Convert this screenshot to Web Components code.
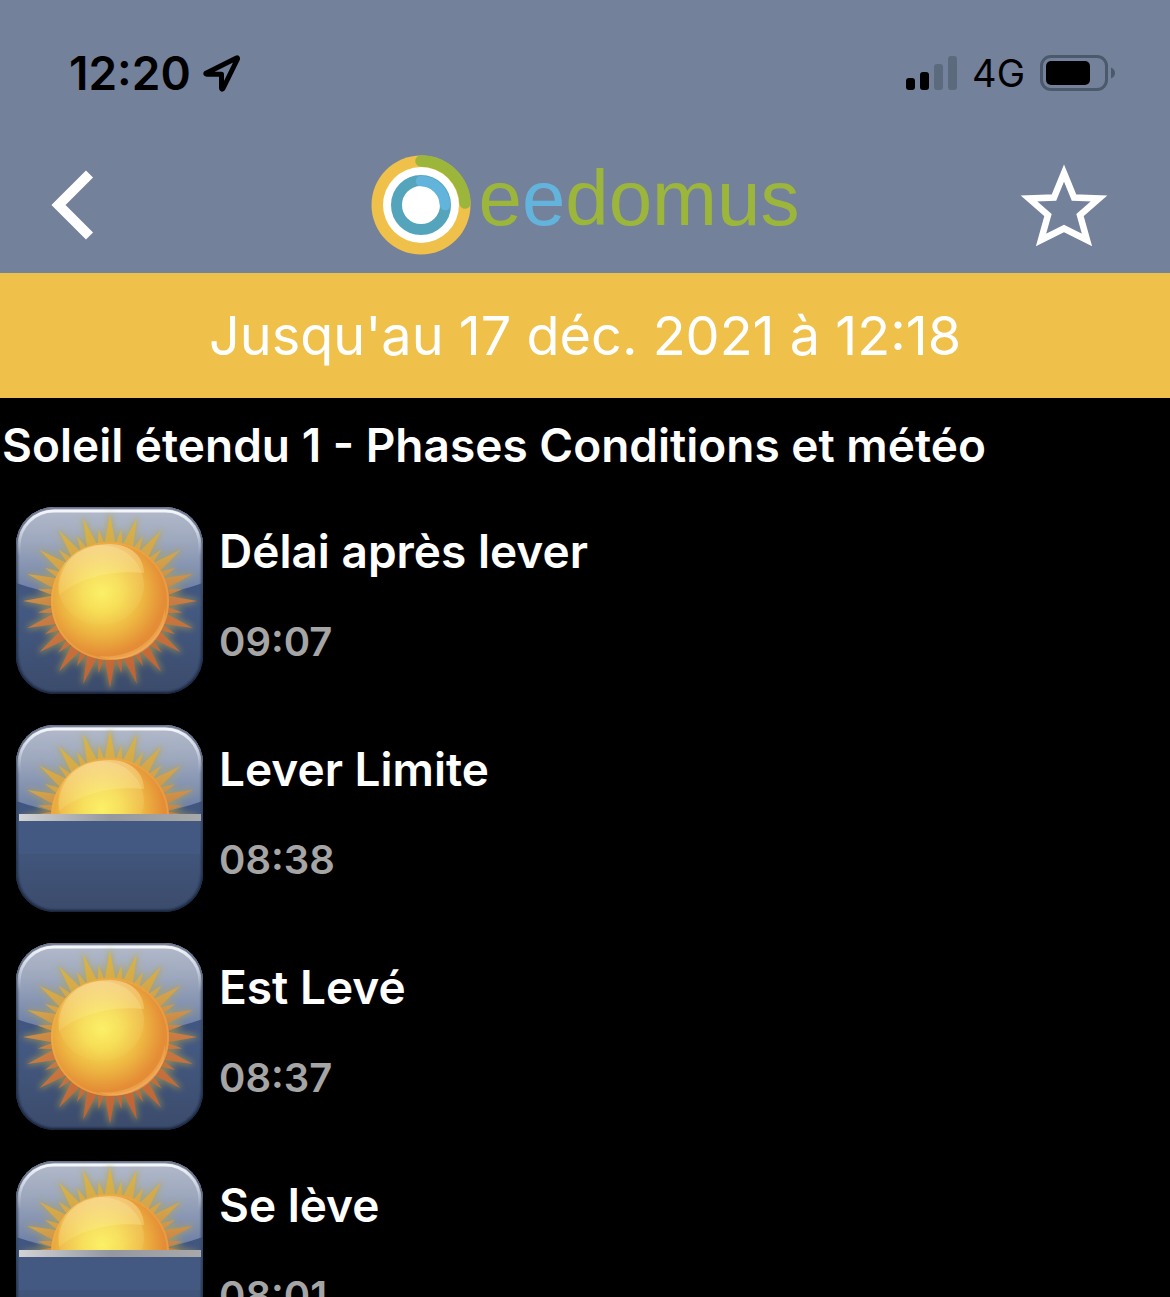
<!DOCTYPE html>
<html lang="fr">
<head>
<meta charset="utf-8">
<meta name="viewport" content="width=device-width, initial-scale=1">
<title>eedomus</title>
<style>
  html, body {
    height: 100%;
    margin: 0;
  }

  body {
    background: #000;
    color: #fff;
    font-family: Inter, "Liberation Sans", sans-serif;
  }
</style>
</head>
<body>
<eed-app>
  <eed-status-bar slot="header" time="12:20" network="4G"></eed-status-bar>
  <eed-nav-bar slot="header"></eed-nav-bar>
  <eed-banner slot="header">Jusqu'au 17 déc. 2021 à 12:18</eed-banner>
  <eed-history label="Soleil étendu 1 - Phases Conditions et météo">
    <eed-event name="Délai après lever" time="09:07" icon="sun"></eed-event>
    <eed-event name="Lever Limite" time="08:38" icon="horizon"></eed-event>
    <eed-event name="Est Levé" time="08:37" icon="sun"></eed-event>
    <eed-event name="Se lève" time="08:01" icon="horizon"></eed-event>
  </eed-history>
</eed-app>

<script>
class EedApp extends HTMLElement {
  connectedCallback() {
    const shadowRoot = this.attachShadow({ mode: 'open' });
    shadowRoot.innerHTML = `
      <style>
        :host {
          display: flex;
          flex-direction: column;
          height: 100vh;
        }

        header {
          flex: none;
          background: #74819b;
        }

        main {
          flex: 1;
          min-height: 0;
          overflow-y: auto;
          scrollbar-width: none;
        }
      </style>
      <header><slot name="header"></slot></header>
      <main><slot></slot></main>`;
  }
}
customElements.define('eed-app', EedApp);

class EedStatusBar extends HTMLElement {
  connectedCallback() {
    const shadowRoot = this.attachShadow({ mode: 'open' });
    shadowRoot.innerHTML = `
      <style>
        :host {
          display: flex;
          justify-content: space-between;
          align-items: center;
          box-sizing: border-box;
          height: 137px;
          padding: 9px 54px 0 69px;
          color: #000;
        }

        div {
          display: flex;
          align-items: center;
        }

        .left {
          gap: 12px;
          font-size: 46px;
          font-weight: 600;
        }

        .right {
          gap: 15px;
          font-size: 38px;
        }

        svg {
          display: block;
        }
      </style>
      <div class="left">
        <span>${this.getAttribute('time')}</span>
        <svg width="38" height="38" viewBox="0 0 38 38" aria-hidden="true">
          <path d="M33.500 4 3 19.300Q2.500 20 4 20.200H18.500V34Q18.500 36 20 34.500L34.500 5Q34.800 3.500 33.500 4Z" fill="none" stroke="#000" stroke-width="5" stroke-linejoin="round"/>
        </svg>
      </div>
      <div class="right">
        <svg width="51" height="36" viewBox="0 0 51 36" aria-hidden="true">
          <rect x="0" y="23" width="9" height="12" rx="3"/>
          <rect x="14" y="17" width="9" height="18" rx="3"/>
          <g fill="#5c6a7d">
            <rect x="28" y="9" width="9" height="26" rx="3"/>
            <rect x="42" y="1" width="9" height="34" rx="3"/>
          </g>
        </svg>
        <span>${this.getAttribute('network')}</span>
        <svg width="76" height="36" viewBox="0 0 76 36" aria-hidden="true">
          <rect x="1.5" y="1.5" width="65" height="33" rx="9.5" fill="none" stroke="#4b596a" stroke-width="3"/>
          <rect x="6" y="6" width="44" height="24" rx="5"/>
          <path d="M71 12.500Q75 14.500 75 18T71 23.500Z" fill="#4b596a"/>
        </svg>
      </div>`;
  }
}
customElements.define('eed-status-bar', EedStatusBar);

class EedNavBar extends HTMLElement {
  connectedCallback() {
    const shadowRoot = this.attachShadow({ mode: 'open' });
    shadowRoot.innerHTML = `
      <style>
        :host {
          display: flex;
          justify-content: space-between;
          align-items: center;
          height: 136px;
          padding: 0 46px;
        }

        button {
          display: flex;
          width: 110px;
          padding: 0;
          border: none;
          background: transparent;
          cursor: pointer;
        }

        svg {
          display: block;
        }

        a {
          display: flex;
          align-items: center;
          gap: 8px;
          color: #9cb63b;
          font: 78px/92px "Liberation Sans", Arial, sans-serif;
          text-decoration: none;
        }

        .name {
          padding-bottom: 14px;
        }

        .blue {
          color: #62b4dc;
        }
      </style>
      <button type="button" aria-label="Retour">
        <svg width="52" height="72" viewBox="0 0 52 72">
          <path d="M43.500 5 12.500 36 43.500 67" fill="none" stroke="#fff" stroke-width="10"/>
        </svg>
      </button>
      <a href="#">
        <svg width="100" height="100" viewBox="0 0 100 100" aria-hidden="true">
          <circle cx="50" cy="50" r="49.500" fill="#efc04a"/>
          <path d="M50 6A44 44 0 0 1 94 48" fill="none" stroke="#9cb63b" stroke-width="11.500" stroke-linecap="round"/>
          <circle cx="50" cy="50" r="38" fill="#fff"/>
          <circle cx="50" cy="50" r="24.500" fill="none" stroke="#54a5bc" stroke-width="11"/>
          <path d="M50 26A24.500 24.500 0 0 1 74 50" fill="none" stroke="#62b4dc" stroke-width="10.500" stroke-linecap="round"/>
        </svg>
        <span class="name">e<span class="blue">e</span>domus</span>
      </a>
      <button type="button" aria-label="Favori">
        <svg width="110" height="92" viewBox="0 0 110 92">
          <path d="M50 14 60 38.500 85 39.500 66 56 73 81 50 69.500 27 81 34 56 15 39.500 40 38.500Z" fill="none" stroke="#fff" stroke-width="6.500" stroke-miterlimit="8"/>
        </svg>
      </button>`;
  }
}
customElements.define('eed-nav-bar', EedNavBar);

class EedBanner extends HTMLElement {
  connectedCallback() {
    const shadowRoot = this.attachShadow({ mode: 'open' });
    shadowRoot.innerHTML = `
      <style>
        :host {
          display: block;
          background: #efc04a;
          color: #fff;
          font-size: 54px;
          line-height: 125px;
          text-align: center;
        }
      </style>
      <slot></slot>`;
  }
}
customElements.define('eed-banner', EedBanner);

class EedHistory extends HTMLElement {
  connectedCallback() {
    const shadowRoot = this.attachShadow({ mode: 'open' });
    shadowRoot.innerHTML = `
      <style>
        :host {
          display: block;
        }

        h1 {
          margin: 0;
          padding-left: 2px;
          font-size: 46px;
          font-weight: 600;
          line-height: 94px;
        }

        div {
          display: flex;
          flex-direction: column;
        }
      </style>
      <h1>${this.getAttribute('label')}</h1>
      <div role="list"><slot></slot></div>`;
  }
}
customElements.define('eed-history', EedHistory);

class EedEvent extends HTMLElement {
  connectedCallback() {
    this.setAttribute('role', 'listitem');
    const shadowRoot = this.attachShadow({ mode: 'open' });
    shadowRoot.innerHTML = `
      <style>
        :host {
          display: flex;
          gap: 16px;
          padding: 15px 16px 16px;
        }

        h2, p {
          margin: 0;
          font-weight: 600;
        }

        h2 {
          font-size: 46px;
          line-height: 88px;
        }

        p {
          color: #a5a5a5;
          font-size: 40px;
          line-height: 94px;
        }
      </style>
      <eed-sun-icon type="${this.getAttribute('icon')}"></eed-sun-icon>
      <div>
        <h2>${this.getAttribute('name')}</h2>
        <p>${this.getAttribute('time')}</p>
      </div>`;
  }
}

class EedSunIcon extends HTMLElement {
  // 20 long rays with a short one between each pair
  rays() {
    let d = '';
    const point = (angle, radius) => {
      const a = angle * Math.PI / 180;
      return (94 + radius * Math.sin(a)).toFixed(1) + ' ' + (94 - radius * Math.cos(a)).toFixed(1);
    };
    for (let i = 0; i < 40; i++) {
      const angle = i * 9;
      const long = i % 2 === 0;
      const half = long ? 5.5 : 3.5;
      d += `M${point(angle - half, 57)}L${point(angle, long ? 87 : 73)}L${point(angle + half, 57)}Z`;
    }
    return d;
  }

  connectedCallback() {
    const horizon = this.getAttribute('type') === 'horizon';
    const rays = this.rays();
    const sun = `
      <path d="${rays}" fill="#b5a548" stroke="#b5a548" stroke-width="3" opacity=".6" filter="url(#glow)"/>
      <path d="${rays}" fill="url(#ray)" opacity=".92"/>
      <circle cx="94" cy="94" r="59" fill="url(#ball)"/>
      <circle cx="94" cy="94" r="58" fill="none" stroke="#f3b54e" stroke-width="2" opacity=".4"/>
      <path d="M43 88C41 52 67 37 94 37c22 0 34 14 34 29-28-3-62 3-85 22Z" fill="url(#shine)"/>
      <ellipse cx="85" cy="78" rx="43" ry="40" fill="url(#halo)"/>
      <path d="M82 149C116 153 145 131 149 101 152 133 119 162 82 149Z" fill="#ffc576" opacity=".35"/>`;

    const shadowRoot = this.attachShadow({ mode: 'open' });
    shadowRoot.innerHTML = `
      <style>
        :host {
          display: block;
          flex: none;
        }

        svg {
          display: block;
        }
      </style>
      <svg width="187" height="187" viewBox="0 0 187 187" aria-hidden="true">
        <defs>
          <linearGradient id="sky" gradientUnits="userSpaceOnUse" x1="0" y1="0" x2="0" y2="92">
            <stop offset="0" stop-color="#b3bbcb"/>
            <stop offset=".35" stop-color="#9fa9be"/>
            <stop offset=".7" stop-color="#8190af"/>
            <stop offset="1" stop-color="#6478a0"/>
          </linearGradient>
          <linearGradient id="ground" x2="0" y2="1">
            <stop offset=".4" stop-color="#40557f"/>
            <stop offset=".55" stop-color="#445982"/>
            <stop offset="1" stop-color="#3b4b6b"/>
          </linearGradient>
          <linearGradient id="edge" x2="0" y2="1">
            <stop offset="0" stop-color="#f4f6fb"/>
            <stop offset=".12" stop-color="#d5dbe8" stop-opacity=".8"/>
            <stop offset=".25" stop-color="#c8d0e0" stop-opacity="0"/>
          </linearGradient>
          <linearGradient id="rim" x2="0" y2="1">
            <stop offset="0" stop-color="#626c82"/>
            <stop offset=".5" stop-color="#31435f"/>
            <stop offset="1" stop-color="#142039"/>
          </linearGradient>
          <linearGradient id="ray" gradientUnits="userSpaceOnUse" x1="80" y1="7" x2="105" y2="181">
            <stop offset="0" stop-color="#dcb83e"/>
            <stop offset=".3" stop-color="#d8a347"/>
            <stop offset=".55" stop-color="#cf7b40"/>
            <stop offset="1" stop-color="#c85c30"/>
          </linearGradient>
          <radialGradient id="ball" gradientUnits="userSpaceOnUse" cx="86" cy="86" r="76">
            <stop offset="0" stop-color="#fbef5d"/>
            <stop offset=".25" stop-color="#f6dc50"/>
            <stop offset=".55" stop-color="#edb541"/>
            <stop offset=".82" stop-color="#e48c36"/>
            <stop offset="1" stop-color="#e39039"/>
          </radialGradient>
          <linearGradient id="shine" x2="0" y2="1">
            <stop offset="0" stop-color="#fff3c5" stop-opacity=".45"/>
            <stop offset="1" stop-color="#fff08a" stop-opacity=".15"/>
          </linearGradient>
          <linearGradient id="halo" x2="0" y2="1">
            <stop offset="0" stop-color="#fff6c0" stop-opacity=".25"/>
            <stop offset="1" stop-color="#fff6a0" stop-opacity=".04"/>
          </linearGradient>
          <linearGradient id="bar">
            <stop offset="0" stop-color="#d2d3d5"/>
            <stop offset=".5" stop-color="#94989f"/>
            <stop offset="1" stop-color="#a9a9aa"/>
          </linearGradient>
          <filter id="glow" x="-10%" y="-10%" width="120%" height="120%">
            <feGaussianBlur stdDeviation="3"/>
          </filter>
          <filter id="soft"><feGaussianBlur stdDeviation="1"/></filter>
          <clipPath id="tile"><rect width="187" height="187" rx="38"/></clipPath>
          <clipPath id="above"><rect width="187" height="89"/></clipPath>
        </defs>
        <g clip-path="url(#tile)">
          <rect width="187" height="187" fill="url(#ground)"/>
          <path d="M0 0H187V76Q94 108 0 76Z" fill="url(#sky)"/>
          <rect width="187" height="187" rx="38" fill="none" stroke="url(#rim)" stroke-width="4" filter="url(#soft)"/>
          <rect x="3" y="4" width="181" height="181" rx="35" fill="none" stroke="url(#edge)" stroke-width="3"/>
        </g>
        ${horizon ? `
          <rect x="3" y="89" width="181" height="40" fill="#445982"/>
          <g clip-path="url(#above)"><g transform="translate(0 -2)">${sun}</g></g>
          <rect x="3" y="89" width="182" height="7" fill="url(#bar)"/>` : sun}
      </svg>`;
  }
}
customElements.define('eed-sun-icon', EedSunIcon);
customElements.define('eed-event', EedEvent);
</script>
</body>
</html>
